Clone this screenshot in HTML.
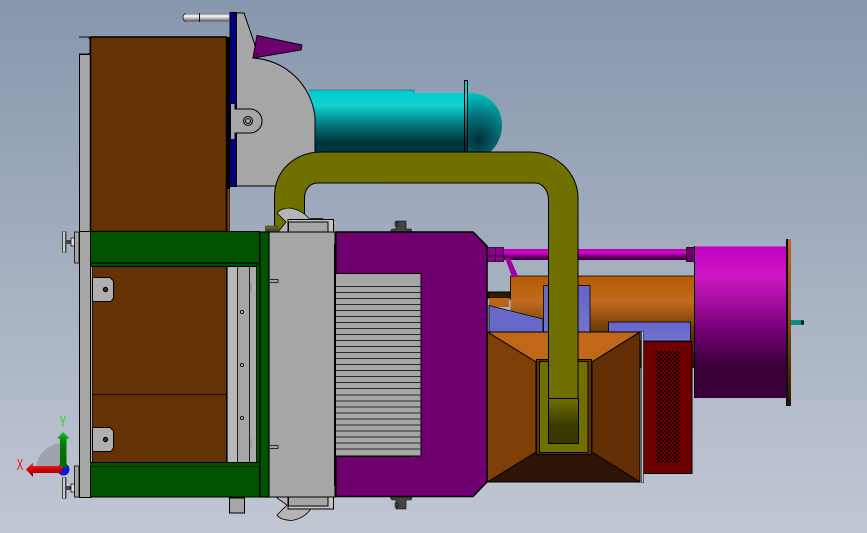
<!DOCTYPE html>
<html><head><meta charset="utf-8"><style>html,body{margin:0;padding:0;background:#a0aaba}svg{display:block}text{font-family:"Liberation Sans",sans-serif}</style></head><body>
<svg width="867" height="533" viewBox="0 0 867 533" xmlns="http://www.w3.org/2000/svg">
<defs>
<linearGradient id="bg" x1="0" y1="0" x2="0" y2="1"><stop offset="0" stop-color="#8797ad"/><stop offset="1" stop-color="#c1c7d3"/></linearGradient>
<linearGradient id="teal" x1="0" y1="0" x2="0" y2="1"><stop offset="0" stop-color="#00cccc"/><stop offset=".25" stop-color="#14d2d2"/><stop offset=".55" stop-color="#047a80"/><stop offset=".85" stop-color="#003238"/><stop offset="1" stop-color="#00383e"/></linearGradient>
<radialGradient id="dome" gradientUnits="userSpaceOnUse" cx="478" cy="140" r="48"><stop offset="0" stop-color="#003038"/><stop offset=".5" stop-color="#067078"/><stop offset="1" stop-color="#00c8c8"/></radialGradient>
<linearGradient id="mag" x1="0" y1="0" x2="0" y2="1"><stop offset="0" stop-color="#c400c4"/><stop offset=".2" stop-color="#cc18c4"/><stop offset=".55" stop-color="#760076"/><stop offset=".8" stop-color="#380038"/><stop offset="1" stop-color="#3c003c"/></linearGradient>
<linearGradient id="pipe" x1="0" y1="0" x2="0" y2="1"><stop offset="0" stop-color="#b000b0"/><stop offset=".3" stop-color="#e000d8"/><stop offset=".7" stop-color="#6a006a"/><stop offset="1" stop-color="#300030"/></linearGradient>
<linearGradient id="or" x1="0" y1="0" x2="0" y2="1"><stop offset="0" stop-color="#b85a00"/><stop offset=".28" stop-color="#c06c20"/><stop offset=".6" stop-color="#6a3804"/><stop offset="1" stop-color="#3a1c00"/></linearGradient>
<linearGradient id="plate" x1="0" y1="0" x2="0" y2="1"><stop offset="0" stop-color="#c06a20"/><stop offset=".5" stop-color="#8a4a10"/><stop offset="1" stop-color="#2a1400"/></linearGradient>
<linearGradient id="oliv" x1="0" y1="0" x2="0" y2="1"><stop offset="0" stop-color="#707000"/><stop offset=".6" stop-color="#3a3a00"/><stop offset="1" stop-color="#363600"/></linearGradient>
<linearGradient id="hnd" x1="0" y1="0" x2="0" y2="1"><stop offset="0" stop-color="#70787f"/><stop offset=".3" stop-color="#fff"/><stop offset=".65" stop-color="#b0b0b0"/><stop offset="1" stop-color="#505050"/></linearGradient>
<linearGradient id="blue" x1="0" y1="0" x2="0" y2="1"><stop offset="0" stop-color="#6464cc"/><stop offset="1" stop-color="#7474cc"/></linearGradient>
<linearGradient id="gy" x1="0" y1="0" x2="0" y2="1"><stop offset="0" stop-color="#18c818"/><stop offset=".25" stop-color="#008000"/><stop offset="1" stop-color="#006800"/></linearGradient>
<linearGradient id="rx" x1="0" y1="0" x2="0" y2="1"><stop offset="0" stop-color="#e84040"/><stop offset=".45" stop-color="#d80000"/><stop offset="1" stop-color="#780000"/></linearGradient>
<pattern id="grille" width="4" height="4" patternUnits="userSpaceOnUse"><rect width="4" height="4" fill="#200000"/><rect x="0" y="0" width="2" height="2" fill="#6f0000"/><rect x="2" y="2" width="2" height="2" fill="#6f0000"/></pattern>
</defs>
<rect width="867" height="533" fill="url(#bg)"/>

<!-- teal tank -->
<path d="M309 90H414V93H470C490 93 502 108 502 125C502 137 496 147 490 152H309Z" fill="url(#teal)"/>
<path d="M468 93C490 93 502 108 502 125C502 137 496 147 490 152H468Z" fill="url(#dome)"/>
<path d="M309 90H414V93" fill="none" stroke="#004" stroke-opacity=".6" stroke-width=".6"/>
<rect x="464.500" y="80.500" width="3" height="72" fill="url(#teal)" stroke="#000"/>

<!-- handle -->
<path d="M186 13.500H229V21.500H186Q183 21 183 17.500Q183 14 186 13.500Z" fill="url(#hnd)"/>
<path d="M186 13.500Q183 14 183 17.500Q183 21 186 21.500" fill="none" stroke="#222" stroke-width=".8"/>
<path d="M199.500 13V22" stroke="#111" stroke-width="1"/>

<!-- grey hopper -->
<path d="M236 13H244L256 48L253 58A66 66 0 0 1 315 117V160H300V186H236Z" fill="#a6a6a6" stroke="#000"/>
<path d="M257 35.500L302 45L301 50L253 58Z" fill="#70006f" stroke="#000"/>
<circle cx="257" cy="54" r="1" fill="#000"/>

<!-- left top -->
<path d="M79 37H89V38.500H90V52L89 54H79" fill="none" stroke="#111" stroke-width="1"/>
<rect x="79.500" y="54.500" width="11" height="177" fill="#a6a6a6" stroke="#000"/>
<rect x="90.500" y="37" width="136" height="194.500" fill="#643204" stroke="#000" stroke-width="1.500"/>
<rect x="226" y="37" width="4" height="194" fill="#000"/>
<rect x="227.500" y="189" width="2" height="42" fill="#8a4608"/>
<rect x="230" y="12.500" width="6.500" height="174" fill="#000080" stroke="#000"/>

<!-- tab -->
<path d="M231 104H235V109H250A12 12 0 0 1 250 133H235V139H231Z" fill="#a6a6a6"/>
<path d="M235 104V109H250A12 12 0 0 1 250 133H235V139" fill="none" stroke="#000"/>
<circle cx="248" cy="121" r="4.500" fill="#a6a6a6" stroke="#000"/><circle cx="248" cy="121" r="2.500" fill="#a6a6a6" stroke="#000"/>

<!-- bolts -->
<path d="M390 232L392 229H396V221H406V229H411L412 232Z" fill="#444" stroke="#000" stroke-width=".6"/><rect x="395" y="222" width="3" height="4" fill="#444" stroke="#000" stroke-width=".5"/>
<path d="M390 497L392 500H396V509H406V500H411L412 497Z" fill="#444" stroke="#000" stroke-width=".6"/><rect x="395" y="503" width="3" height="4" fill="#444" stroke="#000" stroke-width=".5"/>

<!-- back assembly right -->
<rect x="510.500" y="276" width="184" height="92" fill="url(#or)"/>
<path d="M510.500 300V276H694" fill="none" stroke="#000" stroke-width=".8"/>
<rect x="488" y="292" width="22" height="6" fill="#331a04" stroke="#000"/>
<rect x="489" y="298" width="20" height="9" fill="#bb6414"/>
<rect x="543.500" y="285.500" width="46.500" height="47" fill="url(#blue)" stroke="#000" stroke-width=".8"/>
<path d="M489 305.500L543 319V332H489Z" fill="#6868c8" stroke="#000" stroke-width=".8"/>
<rect x="608.500" y="322" width="82" height="19" fill="url(#blue)" stroke="#000" stroke-width=".8"/>

<!-- magenta pipe -->
<rect x="504" y="249" width="183" height="11" fill="url(#pipe)"/>
<rect x="487.500" y="247.500" width="16" height="14" fill="#8c008c" stroke="#111" stroke-width=".8"/>
<path d="M495.500 247V261M487 256H503" stroke="#111" stroke-width=".7"/>
<rect x="686.500" y="247.500" width="8" height="14" fill="#700070" stroke="#000" stroke-width=".8"/>
<path d="M505 258H510L518.500 277H512Z" fill="#a000a0"/>

<!-- drum -->
<rect x="695" y="246.500" width="91" height="151.500" fill="url(#mag)"/>
<path d="M694.500 246V398" stroke="#000"/>
<rect x="786" y="239" width="5" height="167" fill="url(#plate)"/>
<rect x="786" y="239" width="2" height="167" fill="#111"/>
<rect x="791" y="320" width="13" height="5" fill="#0e8a86"/>
<rect x="801" y="320.500" width="3" height="4" fill="#022"/>

<!-- red box -->
<rect x="643.500" y="341.500" width="48.500" height="132" fill="#6f0000" stroke="#000"/>
<rect x="656" y="351" width="24" height="112" fill="url(#grille)"/>
<rect x="641.500" y="331" width="2" height="151.500" fill="#b8c0cc" stroke="#000" stroke-width=".5"/>

<!-- funnel -->
<path d="M487.500 332H640V482H487.500Z" fill="#2e1404" stroke="#000"/>
<path d="M487.500 332H640L592 362H536Z" fill="#c06818" stroke="#000"/>
<path d="M487.500 332L536 362V452L487.500 482Z" fill="#7f3f08" stroke="#000"/>
<path d="M640 332L592 362V452L640 482Z" fill="#632f06" stroke="#000"/>
<rect x="536.500" y="359.500" width="55" height="95" fill="#643204" stroke="#000"/>
<rect x="539.500" y="361.500" width="48.500" height="91" fill="#707000" stroke="#000"/>

<!-- pipe -->
<path d="M274.500 232V197C274.500 170 295 152 322 152H530C556 152 578 173 578 198V443.500H548.500V200C548.500 190 542 183 535 183H318C309 183 304.500 190 304.500 198V232Z" fill="#707000" stroke="#000" stroke-width="1"/>
<rect x="548.500" y="398.500" width="30" height="45" fill="url(#oliv)" stroke="#000"/>

<!-- clamp top -->
<rect x="265.500" y="226" width="12" height="6" fill="#706f00" stroke="#333" stroke-width=".6"/>
<rect x="266" y="228.500" width="11" height="3.500" fill="#444"/>
<path d="M277 213Q281 208 290 208Q303 210 310 220L310 232H278L286 222Z" fill="#b4b4b4" stroke="#000" stroke-width=".8"/>
<rect x="288" y="219.500" width="45.500" height="12.500" fill="#c4c4c4" stroke="#000"/>
<rect x="288.500" y="222" width="39.500" height="10" fill="#a6a6a6" stroke="#000"/>
<rect x="310" y="218" width="13" height="1.500" fill="#222"/>

<!-- clamp bottom -->
<path d="M277 498L287 505L277 515Q280 520 292 520.500Q304 518 310 510V497H277Z" fill="#b4b4b4" stroke="#000" stroke-width=".8"/>
<rect x="288" y="497" width="45.500" height="12" fill="#c4c4c4" stroke="#000"/>
<rect x="288.500" y="497" width="39.500" height="9" fill="#a6a6a6" stroke="#000"/>
<rect x="229.500" y="498" width="15" height="15" fill="#a6a6a6" stroke="#000"/>

<!-- purple body -->
<path d="M336 232H473L487 246V482L473 496.500H336Z" fill="#70006f" stroke="#000" stroke-width="1.500"/>
<rect x="335" y="273.500" width="86" height="182.500" fill="#a6a6a6" stroke="#000"/>
<path d="M335 286.500H421M335 292.500H421M335 298.500H421M335 304.500H421M335 310.500H421M335 316.500H421M335 322.500H421M335 328.500H421M335 334.500H421M335 340.500H421M335 346.500H421M335 352.500H421M335 358.500H421M335 364.500H421M335 370.500H421M335 376.500H421M335 382.500H421M335 388.500H421M335 395H421M335 401H421M335 407H421M335 413H421M335 419H421M335 425H421M335 431H421M335 437H421M335 443H421M335 449H421" stroke="#000" stroke-width=".8" fill="none"/>
<rect x="335" y="455.500" width="75" height="1.500" fill="#000"/>

<!-- grey block -->
<rect x="269" y="232" width="66" height="265" fill="#a6a6a6" stroke="#000"/>
<rect x="334" y="244" width="2" height="242" fill="#000"/>
<path d="M270 279.500H278V282.500H270M270 445.500H278V448.500H270" fill="#a6a6a6" stroke="#000" stroke-width=".7"/>

<!-- lower left frame -->
<rect x="74.500" y="232" width="4.500" height="31" fill="#a6a6a6" stroke="#000" stroke-width=".8"/>
<rect x="74.500" y="466" width="4.500" height="31" fill="#a6a6a6" stroke="#000" stroke-width=".8"/>
<rect x="79.500" y="231.500" width="11.500" height="266" fill="#a6a6a6" stroke="#000"/>
<rect x="90.500" y="231.500" width="169" height="265.500" fill="#005400" stroke="#000"/>
<path d="M90 263H260M90 266.500H256" stroke="#000" stroke-width="1.200"/>
<rect x="91" y="267" width="135.500" height="195" fill="#643204"/>
<rect x="91" y="267" width="1.500" height="195" fill="#b0b0b0"/>
<path d="M92.500 267V462" stroke="#000" stroke-width=".8"/>
<path d="M92 394.500H226" stroke="#000" stroke-width=".8"/>
<rect x="227" y="267" width="29.500" height="196" fill="#a6a6a6"/>
<rect x="228" y="267" width="9" height="196" fill="#b8b8b8"/>
<rect x="250" y="267" width="6" height="196" fill="#acacac"/>
<path d="M237.500 267V463M249.500 267V463" stroke="#000" stroke-width=".8"/>
<path d="M226.800 267V463" stroke="#000" stroke-width="1.500"/>
<circle cx="242" cy="312" r="1.600" fill="#a6a6a6" stroke="#000" stroke-width=".8"/><circle cx="242" cy="365" r="1.600" fill="#a6a6a6" stroke="#000" stroke-width=".8"/><circle cx="242" cy="418" r="1.600" fill="#a6a6a6" stroke="#000" stroke-width=".8"/>
<path d="M251 282V291M251 439V448" stroke="#777" stroke-width=".7"/>
<rect x="256.500" y="265" width="3.500" height="200" fill="#005400" stroke="#000" stroke-width=".8"/>
<path d="M90 462.500H260M90 466H260" stroke="#000" stroke-width="1"/>
<rect x="90" y="463" width="170" height="3" fill="#005400"/>
<rect x="260" y="232" width="9" height="265" fill="#005400" stroke="#000" stroke-width="1.200"/>
<path d="M92.500 277.500H110L113.500 281V298L111 301.500H92.500Z" fill="#b0b0b0" stroke="#000"/>
<path d="M92.500 427.500H110L113.500 431V448L111 451.500H92.500Z" fill="#b0b0b0" stroke="#000"/>
<circle cx="105.500" cy="289.500" r="2.200" fill="#4e2803" stroke="#000"/><circle cx="105.500" cy="439.500" r="2.200" fill="#4e2803" stroke="#000"/>

<!-- knobs -->
<rect x="66" y="240" width="6" height="4" fill="#444"/><rect x="71" y="238" width="3.500" height="8" fill="#ddd" stroke="#000" stroke-width=".7"/>
<rect x="62" y="231" width="4.500" height="22" rx="1.500" fill="#444"/><rect x="63.200" y="231.500" width="1.600" height="21" fill="#eee"/>
<rect x="66" y="486" width="6" height="4" fill="#444"/><rect x="71" y="484" width="3.500" height="8" fill="#ddd" stroke="#000" stroke-width=".7"/>
<rect x="62" y="477" width="4.500" height="22" rx="1.500" fill="#444"/><rect x="63.200" y="477.500" width="1.600" height="21" fill="#eee"/>

<!-- triad -->
<path d="M36 470A27 27 0 0 1 63 443V470Z" fill="#9ea3ad"/>
<circle cx="63.500" cy="469.500" r="6" fill="#1414e0"/>
<path d="M60 438H66.500V468H60ZM57 438.500L63 432L69.500 438.500Z" fill="url(#gy)"/>
<path d="M32 466H62V473H32ZM33 462.500V477L26 469.500Z" fill="url(#rx)"/>
<text transform="translate(20 470) scale(.6 1)" font-size="16" fill="#f01010" text-anchor="middle">X</text>
<text transform="translate(63 427) scale(.6 1)" font-size="16" fill="#10e010" text-anchor="middle">Y</text>
</svg>
</body></html>
